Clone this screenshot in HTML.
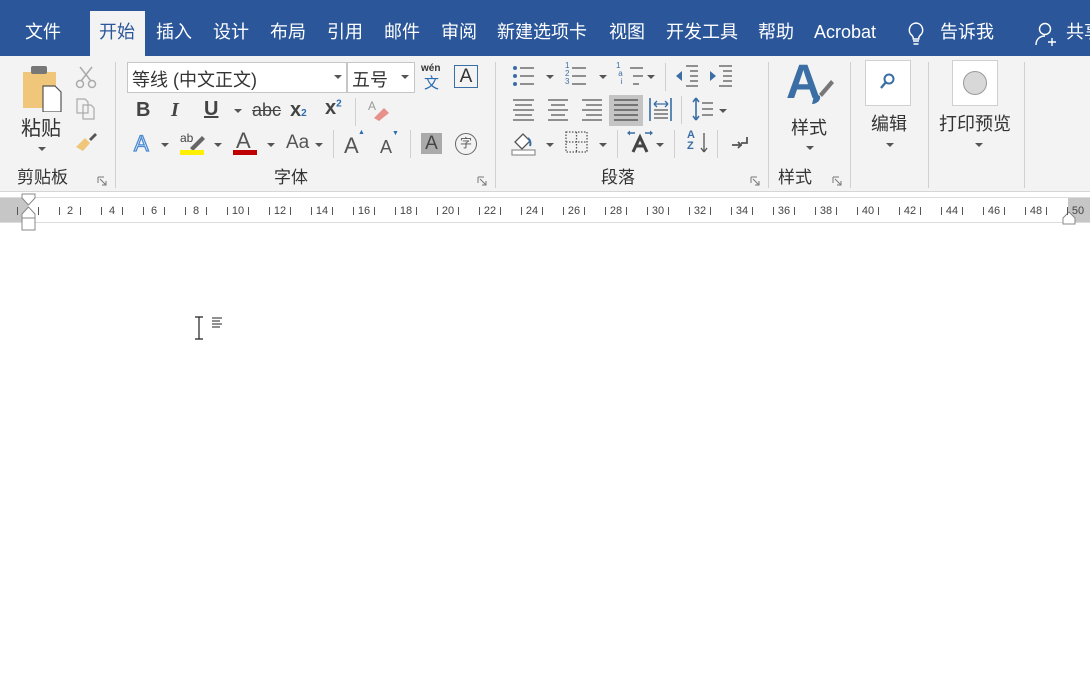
<!DOCTYPE html>
<html><head><meta charset="utf-8">
<style>
*{margin:0;padding:0;box-sizing:border-box}
body{width:1090px;height:684px;overflow:hidden;background:#fff;font-family:"Liberation Sans","Noto Sans CJK SC",sans-serif;position:relative}
.a{position:absolute}
.tab{position:absolute;top:19px;color:#fff;font-size:18px;line-height:26px;white-space:nowrap}
.lbl{position:absolute;top:167px;font-size:17px;color:#333;line-height:22px}
.sep{position:absolute;width:1px;background:#d0d0d0}
.dd{position:absolute;width:0;height:0;border-left:4px solid transparent;border-right:4px solid transparent;border-top:4px solid #555}
.tk{position:absolute;top:207px;width:1px;height:8px;background:#555}
.rn{position:absolute;top:203px;font-size:11px;color:#444;width:20px;text-align:center;line-height:16px}
.gi{font-weight:bold;color:#444}
</style></head><body>
<div class="a" style="left:0;top:0;width:1090px;height:56px;background:#2b579a"></div>
<div class="a" style="left:90px;top:11px;width:55px;height:46px;background:#f3f3f3"></div>
<div class="tab" style="left:25px">文件</div>
<div class="tab" style="left:99px;color:#2b579a">开始</div>
<div class="tab" style="left:156px">插入</div>
<div class="tab" style="left:213px">设计</div>
<div class="tab" style="left:270px">布局</div>
<div class="tab" style="left:327px">引用</div>
<div class="tab" style="left:384px">邮件</div>
<div class="tab" style="left:441px">审阅</div>
<div class="tab" style="left:497px">新建选项卡</div>
<div class="tab" style="left:609px">视图</div>
<div class="tab" style="left:666px">开发工具</div>
<div class="tab" style="left:758px">帮助</div>
<div class="tab" style="left:814px">Acrobat</div>
<svg class="a" style="left:905px;top:21px" width="22" height="26" viewBox="0 0 22 26"><path d="M11 2a7 7 0 0 0-4 12.5c1 1 1.3 2 1.3 3.5h5.4c0-1.5.3-2.5 1.3-3.5A7 7 0 0 0 11 2z" fill="none" stroke="#fff" stroke-width="1.5"/><path d="M8 20h6M8.5 23h5" stroke="#fff" stroke-width="1.5"/></svg>
<div class="tab" style="left:940px">告诉我</div>
<svg class="a" style="left:1034px;top:21px" width="26" height="26" viewBox="0 0 26 26"><circle cx="11" cy="8" r="5.5" fill="none" stroke="#fff" stroke-width="1.4"/><path d="M2 24c0-6 4-9 9-9" fill="none" stroke="#fff" stroke-width="1.4"/><path d="M18 17v8M14 21h8" stroke="#fff" stroke-width="1.4"/></svg>
<div class="tab" style="left:1066px">共享</div>

<div class="a" style="left:0;top:56px;width:1090px;height:136px;background:#f3f3f3;border-bottom:1px solid #d6d6d6"></div>
<div class="sep" style="left:115px;top:62px;height:126px"></div>
<div class="sep" style="left:495px;top:62px;height:126px"></div>
<div class="sep" style="left:768px;top:62px;height:126px"></div>
<div class="sep" style="left:850px;top:62px;height:126px"></div>
<div class="sep" style="left:928px;top:62px;height:126px"></div>
<div class="sep" style="left:1024px;top:62px;height:126px"></div>

<svg class="a" style="left:22px;top:64px" width="44" height="48" viewBox="0 0 44 48"><rect x="1" y="8" width="33" height="36" fill="#f0c67a"/><rect x="9" y="2" width="16" height="8" rx="2" fill="#777"/><path d="M21 22h12l6 6v20H21z" fill="#fff" stroke="#555" stroke-width="1.2"/></svg>
<div class="a" style="left:21px;top:112px;font-size:20px;color:#333">粘贴</div>
<div class="dd" style="left:38px;top:147px"></div>
<svg class="a" style="left:75px;top:65px" width="22" height="24" viewBox="0 0 22 24"><path d="M5 2l11 14M17 2L6 16" stroke="#aaa" stroke-width="1.5"/><circle cx="5" cy="19" r="3.5" fill="none" stroke="#aaa" stroke-width="1.5"/><circle cx="17" cy="19" r="3.5" fill="none" stroke="#aaa" stroke-width="1.5"/></svg>
<svg class="a" style="left:75px;top:97px" width="22" height="24" viewBox="0 0 22 24"><path d="M2 2h8l3 3v11H2z M8 8h8l3 3v11H8z" fill="#f3f3f3" stroke="#aaa" stroke-width="1.2"/></svg>
<svg class="a" style="left:74px;top:131px" width="24" height="22" viewBox="0 0 24 22"><path d="M15 8l6-6 2 2-6 6z" fill="#555"/><path d="M2 16l9-9 5 5-7 8z" fill="#f0c67a"/></svg>
<div class="lbl" style="left:17px">剪贴板</div>
<svg class="a" style="left:97px;top:176px" width="10" height="10"><path d="M1 1h6M1 1v6M3 3l6 6M5 9h4V5" stroke="#777" fill="none"/></svg>

<div class="a" style="left:127px;top:62px;width:220px;height:31px;background:#fff;border:1px solid #c6c6c6;font-size:18px;color:#333;padding:3px 0 0 4px">等线 (中文正文)</div>
<div class="dd" style="left:334px;top:75px"></div>
<div class="a" style="left:347px;top:62px;width:68px;height:31px;background:#fff;border:1px solid #c6c6c6;font-size:18px;color:#333;padding:3px 0 0 4px">五号</div>
<div class="dd" style="left:401px;top:75px"></div>
<div class="a" style="left:421px;top:63px;font-size:10px;color:#333;font-weight:bold">wén</div>
<div class="a" style="left:424px;top:72px;font-size:15px;color:#2b6cb0">文</div>
<div class="a" style="left:454px;top:65px;width:24px;height:23px;border:1px solid #3a6ea5;font-size:19px;color:#333;text-align:center;line-height:21px">A</div>
<div class="a gi" style="left:136px;top:99px;font-size:20px">B</div>
<div class="a" style="left:171px;top:99px;font-size:20px;font-style:italic;color:#444;font-family:'Liberation Serif',serif;font-weight:bold">I</div>
<div class="a gi" style="left:204px;top:98px;font-size:20px;text-decoration:underline">U</div>
<div class="dd" style="left:234px;top:109px"></div>
<div class="a" style="left:252px;top:100px;font-size:18px;color:#444;text-decoration:line-through">abc</div>
<div class="a gi" style="left:290px;top:99px;font-size:20px">x<span style="font-size:10px;color:#2b6cb0">2</span></div>
<div class="a gi" style="left:325px;top:97px;font-size:20px">x<sup style="font-size:10px;color:#2b6cb0">2</sup></div>
<div class="sep" style="left:355px;top:98px;height:28px"></div>
<svg class="a" style="left:366px;top:98px" width="24" height="26"><text x="2" y="12" font-size="12" fill="#999" font-family="Liberation Sans">A</text><path d="M8 20l10-10 5 5-10 8z" fill="#e8918a"/></svg>
<div class="a" style="left:134px;top:131px;font-size:22px;color:#fff;-webkit-text-stroke:1.3px #4a8ad0">A</div>
<div class="dd" style="left:161px;top:143px"></div>
<div class="a" style="left:180px;top:131px;font-size:12px;color:#444">ab</div>
<svg class="a" style="left:186px;top:132px" width="20" height="20"><path d="M4 16l12-12 3 3-12 12z" fill="#666"/></svg>
<div class="a" style="left:180px;top:150px;width:24px;height:5px;background:#ffef00"></div>
<div class="dd" style="left:214px;top:143px"></div>
<div class="a" style="left:236px;top:128px;font-size:22px;color:#555">A</div>
<div class="a" style="left:233px;top:150px;width:24px;height:5px;background:#c00000"></div>
<div class="dd" style="left:267px;top:143px"></div>
<div class="a" style="left:286px;top:132px;font-size:19px;color:#555">Aa</div>
<div class="dd" style="left:315px;top:143px"></div>
<div class="sep" style="left:333px;top:130px;height:28px"></div>
<div class="a" style="left:344px;top:133px;font-size:22px;color:#555">A</div>
<div class="a" style="left:358px;top:129px;font-size:7px;color:#2b6cb0">▲</div>
<div class="a" style="left:380px;top:137px;font-size:18px;color:#555">A</div>
<div class="a" style="left:392px;top:130px;font-size:7px;color:#2b6cb0">▼</div>
<div class="sep" style="left:410px;top:130px;height:28px"></div>
<div class="a" style="left:421px;top:133px;width:21px;height:21px;background:#aaa;font-size:19px;color:#444;text-align:center;line-height:21px">A</div>
<div class="a" style="left:455px;top:133px;width:22px;height:22px;border:1.5px solid #666;border-radius:50%;font-size:12px;color:#555;text-align:center;line-height:19px">字</div>
<div class="lbl" style="left:274px">字体</div>
<svg class="a" style="left:477px;top:176px" width="10" height="10"><path d="M1 1h6M1 1v6M3 3l6 6M5 9h4V5" stroke="#777" fill="none"/></svg>

<div class="a" style="left:609px;top:95px;width:34px;height:31px;background:#c4c4c4"></div>
<svg class="a" style="left:0;top:0" width="1090" height="200" fill="none" stroke="#555" stroke-width="1.3">
<circle cx="515" cy="68" r="2" fill="#3a6ea5" stroke="none"/><circle cx="515" cy="76" r="2" fill="#3a6ea5" stroke="none"/><circle cx="515" cy="84" r="2" fill="#3a6ea5" stroke="none"/>
<path d="M520 68h14M520 76h14M520 84h14"/>
<path d="M572 68h14M572 76h14M572 84h14"/>
<path d="M630 68h13M633 76h10M633 84h6"/>
<path d="M686 66h12M690 71h8M690 76h8M690 81h8M686 86h12"/>
<path d="M719 66h13M723 71h9M723 76h9M723 81h9M719 86h13"/>
<path d="M676 76l6-5v10z M716 76l-6-5v10z" fill="#3a6ea5" stroke="none"/>
<path d="M513 100h21M515 105h17M513 110h21M515 115h17M513 120h21"/>
<path d="M548 100h20M551 105h14M548 110h20M551 115h14M548 120h20"/>
<path d="M582 100h20M586 105h16M582 110h20M586 115h16M582 120h20"/>
<path d="M614 100h24M614 105h24M614 110h24M614 115h24M614 120h24" stroke="#444"/>
<path d="M650 98v23M671 98v23" stroke="#3a6ea5" stroke-width="1.6"/>
<path d="M654 104h14M654 104l3-3M654 104l3 3M668 104l-3-3M668 104l-3 3" stroke="#3a6ea5"/>
<path d="M654 110h14M654 114h14M654 118h14"/>
<path d="M696 98v22M696 98l-3 4M696 98l3 4M696 120l-3-4M696 120l3-4" stroke="#3a6ea5" stroke-width="1.6"/>
<path d="M702 103h11M702 109h11M702 115h11"/>
<rect x="512" y="150" width="23" height="5" fill="#fff" stroke="#999"/>
<path d="M515 142l8-8 7 7-8 8z" fill="#fff"/><path d="M528 138c2 2 3 5 2 8" stroke="#3a6ea5" stroke-width="2"/>
<path d="M566 132h21v20h-21zM576.5 132v20M566 142h21" stroke-dasharray="1.5 1.5"/>
<path d="M633 152l7-15 7 15M636 146h8" stroke="#444" stroke-width="3"/>
<path d="M629 133h6M651 133h-6" stroke="#3a6ea5" stroke-width="1.5"/><path d="M627 133l3-2.5v5zM653 133l-3-2.5v5z" fill="#3a6ea5" stroke="none"/>
<path d="M704 133v19M704 152l-3-4M704 152l3-4"/>
<path d="M732 145h10M738 142l3 3-3 3M747 137v6h-6" stroke-width="1.8"/>
</svg>
<div class="a" style="left:565px;top:62px;font-size:8px;line-height:8px;color:#3a6ea5">1<br>2<br>3</div>
<div class="a" style="left:616px;top:62px;font-size:8px;line-height:8px;color:#3a6ea5">1<br>&nbsp;a<br>&nbsp;&nbsp;i</div>
<div class="a" style="left:687px;top:130px;font-size:11px;color:#3a6ea5;font-weight:bold;line-height:11px">A<br>Z</div>
<div class="sep" style="left:665px;top:63px;height:28px"></div>
<div class="sep" style="left:681px;top:96px;height:28px"></div>
<div class="sep" style="left:617px;top:130px;height:28px"></div>
<div class="sep" style="left:674px;top:130px;height:28px"></div>
<div class="sep" style="left:717px;top:130px;height:28px"></div>
<div class="dd" style="left:546px;top:75px"></div><div class="dd" style="left:599px;top:75px"></div><div class="dd" style="left:647px;top:75px"></div>
<div class="dd" style="left:719px;top:109px"></div>
<div class="dd" style="left:546px;top:143px"></div><div class="dd" style="left:599px;top:143px"></div><div class="dd" style="left:656px;top:143px"></div>
<div class="lbl" style="left:601px">段落</div>
<svg class="a" style="left:750px;top:176px" width="10" height="10"><path d="M1 1h6M1 1v6M3 3l6 6M5 9h4V5" stroke="#777" fill="none"/></svg>

<div class="a" style="left:786px;top:58px;font-size:48px;color:#3a6ea5;font-weight:bold;line-height:50px">A</div>
<svg class="a" style="left:806px;top:70px" width="30" height="40"><path d="M13 24l12-14 3 3-12 14z" fill="#777"/><path d="M6 34c4 0 9-3 8-8l-4-2c-3 2-3 7-4 10z" fill="#3a6ea5"/></svg>
<div class="a" style="left:791px;top:114px;font-size:18px;color:#333">样式</div>
<div class="dd" style="left:806px;top:146px"></div>
<div class="lbl" style="left:778px">样式</div>
<svg class="a" style="left:832px;top:176px" width="10" height="10"><path d="M1 1h6M1 1v6M3 3l6 6M5 9h4V5" stroke="#777" fill="none"/></svg>

<div class="a" style="left:865px;top:60px;width:46px;height:46px;background:#fff;border:1px solid #d0d0d0"></div>
<svg class="a" style="left:877px;top:71px" width="22" height="22"><circle cx="12" cy="8" r="4.5" fill="none" stroke="#3a6ea5" stroke-width="2"/><path d="M9 11l-5 6" stroke="#3a6ea5" stroke-width="2.3"/></svg>
<div class="a" style="left:871px;top:110px;font-size:18px;color:#333">编辑</div>
<div class="dd" style="left:886px;top:143px"></div>

<div class="a" style="left:952px;top:60px;width:46px;height:46px;background:#fff;border:1px solid #d0d0d0"></div>
<div class="a" style="left:963px;top:71px;width:24px;height:24px;border-radius:50%;background:#d8d8d8;border:1.5px solid #9a9a9a"></div>
<div class="a" style="left:939px;top:110px;font-size:18px;color:#333">打印预览</div>
<div class="dd" style="left:975px;top:143px"></div>

<div class="a" style="left:0;top:197px;width:1090px;height:26px;background:#fff;border-top:1px solid #dcdcdc;border-bottom:1px solid #dcdcdc"></div>
<div class="a" style="left:0;top:198px;width:28px;height:24px;background:#c6c6c6"></div>
<div class="a" style="left:1068px;top:198px;width:22px;height:24px;background:#c6c6c6"></div>
<svg class="a" style="left:21px;top:193px" width="16" height="40"><path d="M1 1h13v4l-6.5 7L1 5z M1 25v-4l6.5-7 6.5 7v4z M1 25h13v12H1z" fill="#fff" stroke="#888"/></svg>
<svg class="a" style="left:1062px;top:211px" width="14" height="14"><path d="M1 13V7l6-6 6 6v6z" fill="#fff" stroke="#888"/></svg>
<div id="r"></div>
<script>
var h='';
for(var k=0;k<51;k++){var x=17+21*k;if(x>1075)break;if(x<1068)h+='<div class="tk" style="left:'+x+'px"></div>';}
for(var n=2;n<=50;n+=2){var x=70+21*(n-2);h+='<div class="rn" style="left:'+(x-10)+'px">'+n+'</div>';}
document.getElementById('r').innerHTML=h;
</script>

<svg class="a" style="left:193px;top:315px" width="40" height="26"><path d="M2 2h8M6 2v22M2 24h8" stroke="#222" stroke-width="1.2" fill="none"/><path d="M19 3h10M19 6h8M19 9h10M19 12h8" stroke="#222" stroke-width="1"/></svg>
</body></html>
